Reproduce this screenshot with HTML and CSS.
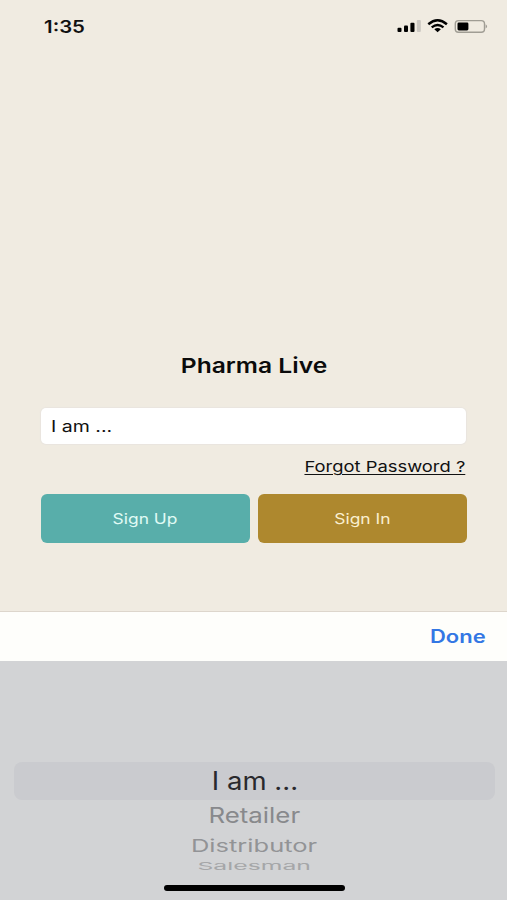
FILE: index.html
```
<!DOCTYPE html>
<html lang="en">
<head>
<meta charset="utf-8">
<title>Pharma Live</title>
<link rel="stylesheet" href="styles.css">
</head>
<body>
<div class="screen">
  <header class="status">
    <span class="wide time">1:35</span>
    <svg class="indicators" width="92" height="16" viewBox="0 0 92 16">
      <rect x="0.5" y="9.7" width="4" height="4.3" rx="1"/>
      <rect x="7" y="7.6" width="4" height="6.4" rx="1"/>
      <rect x="13.4" y="4.8" width="4.1" height="9.2" rx="1"/>
      <rect x="19.8" y="2" width="4" height="12" rx="1" fill="#cbc7c1"/>
      <path d="M31.3 6.2Q40.6-1.6 49.9 6.2" fill="none" stroke="#000" stroke-width="2.5"/>
      <path d="M34.7 9.4Q40.6 4.6 46.5 9.4" fill="none" stroke="#000" stroke-width="2.3"/>
      <path d="M37.3 11.3Q40.6 8.8 43.9 11.3L40.6 14.3Z"/>
      <rect x="58.3" y="2.6" width="29.2" height="11.6" rx="3.2" fill="none" stroke="#a09d94" stroke-width="1.4"/>
      <rect x="60.5" y="4.4" width="10.9" height="8" rx="1.3"/>
      <path d="M88.6 6.2Q91.6 8.3 88.6 10.6Z" fill="#a09d94"/>
    </svg>
  </header>
  <main class="login">
    <h1 class="title"><span class="wide title-text">Pharma Live</span></h1>
    <div class="field"><span class="wide field-text">I am ...</span></div>
    <div class="forgot"><a class="wide forgot-text">Forgot Password ?</a></div>
    <div class="actions">
      <button class="button sign-up"><span class="wide">Sign Up</span></button>
      <button class="button sign-in"><span class="wide">Sign In</span></button>
    </div>
  </main>
  <div class="toolbar"><span class="wide done">Done</span></div>
  <section class="picker">
    <div class="option selected"><span class="wide">I am ...</span></div>
    <div class="option near"><span class="wide">Retailer</span></div>
    <div class="option far"><span class="wide">Distributor</span></div>
    <div class="option edge"><span class="wide">Salesman</span></div>
    <div class="home"></div>
  </section>
</div>
</body>
</html>
```
FILE: styles.css
```
* { box-sizing: border-box; }
body { margin: 0; font-family: Inter, "Liberation Sans", sans-serif; color: #111; }
.screen { width: 507px; height: 900px; display: flex; flex-direction: column; overflow: hidden; background: #f0ebe1; }
.wide { display: inline-block; white-space: nowrap; transform: scaleX(1.2); }

.status { height: 53px; display: flex; align-items: center; justify-content: space-between; padding: 0 18px 0 44px; }
.time { font-size: 17px; font-weight: 600; transform-origin: left; }
.indicators { display: block; margin-top: -1px; }

.login { height: 558px; padding: 298px 40px 0 41px; }
.title { margin: 0; height: 30px; line-height: 30px; text-align: center; font-size: 20.5px; font-weight: 600; color: #0b0b0b; }
.field { margin: 27px 1px 0 0; height: 36px; line-height: 37px; padding-left: 10px; border-radius: 5px; background: #fff; box-shadow: 0 0 1px 1px #e9e5df; font-size: 16px; }
.field-text { transform-origin: left; transform: scaleX(1.22); }
.forgot { height: 49.5px; padding: 12px 2px 0 0; line-height: 22px; text-align: right; font-size: 15px; }
.forgot-text { transform-origin: right; transform: scaleX(1.225); text-decoration: underline; text-underline-offset: 2px; text-decoration-thickness: 1px; text-decoration-skip-ink: auto; }
.actions { display: grid; grid-template-columns: 209px 209px; gap: 8px; }
.button { height: 49px; padding: 0; border: 0; border-radius: 6px; font: 400 14.5px Inter, sans-serif; }
.sign-up { background: #58aeaa; color: #e0fbf5; }
.sign-in { background: #ae882e; color: #faefcf; }

.toolbar { height: 50px; display: flex; align-items: center; justify-content: flex-end; padding-right: 21px; background: #fefefb; border-top: 1px solid #ddd6cc; }
.done { font-size: 18px; font-weight: 600; color: #3377e4; transform-origin: right; transform: scaleX(1.22); }

.picker { height: 239px; padding: 101px 12px 0 14px; background: #d2d3d5; display: flex; flex-direction: column; }
.option { text-align: center; }
.selected { height: 38px; line-height: 38px; border-radius: 8px; background: #cacbcf; font-size: 25.5px; color: #29292d; }
.selected .wide { transform: scaleX(1.08); }
.near { height: 32px; line-height: 32px; font-size: 21px; color: #88898c; }
.near .wide { transform: scaleX(1.23); }
.far { height: 27px; line-height: 28px; font-size: 17px; color: #929396; }
.far .wide { transform: scaleX(1.5); }
.edge { height: 16px; line-height: 15px; font-size: 11px; color: #a5a6a8; }
.edge .wide { transform: scaleX(2.25); }
.home { width: 181px; height: 6px; margin: 10px auto 0; border-radius: 3px; background: #000; }
```
